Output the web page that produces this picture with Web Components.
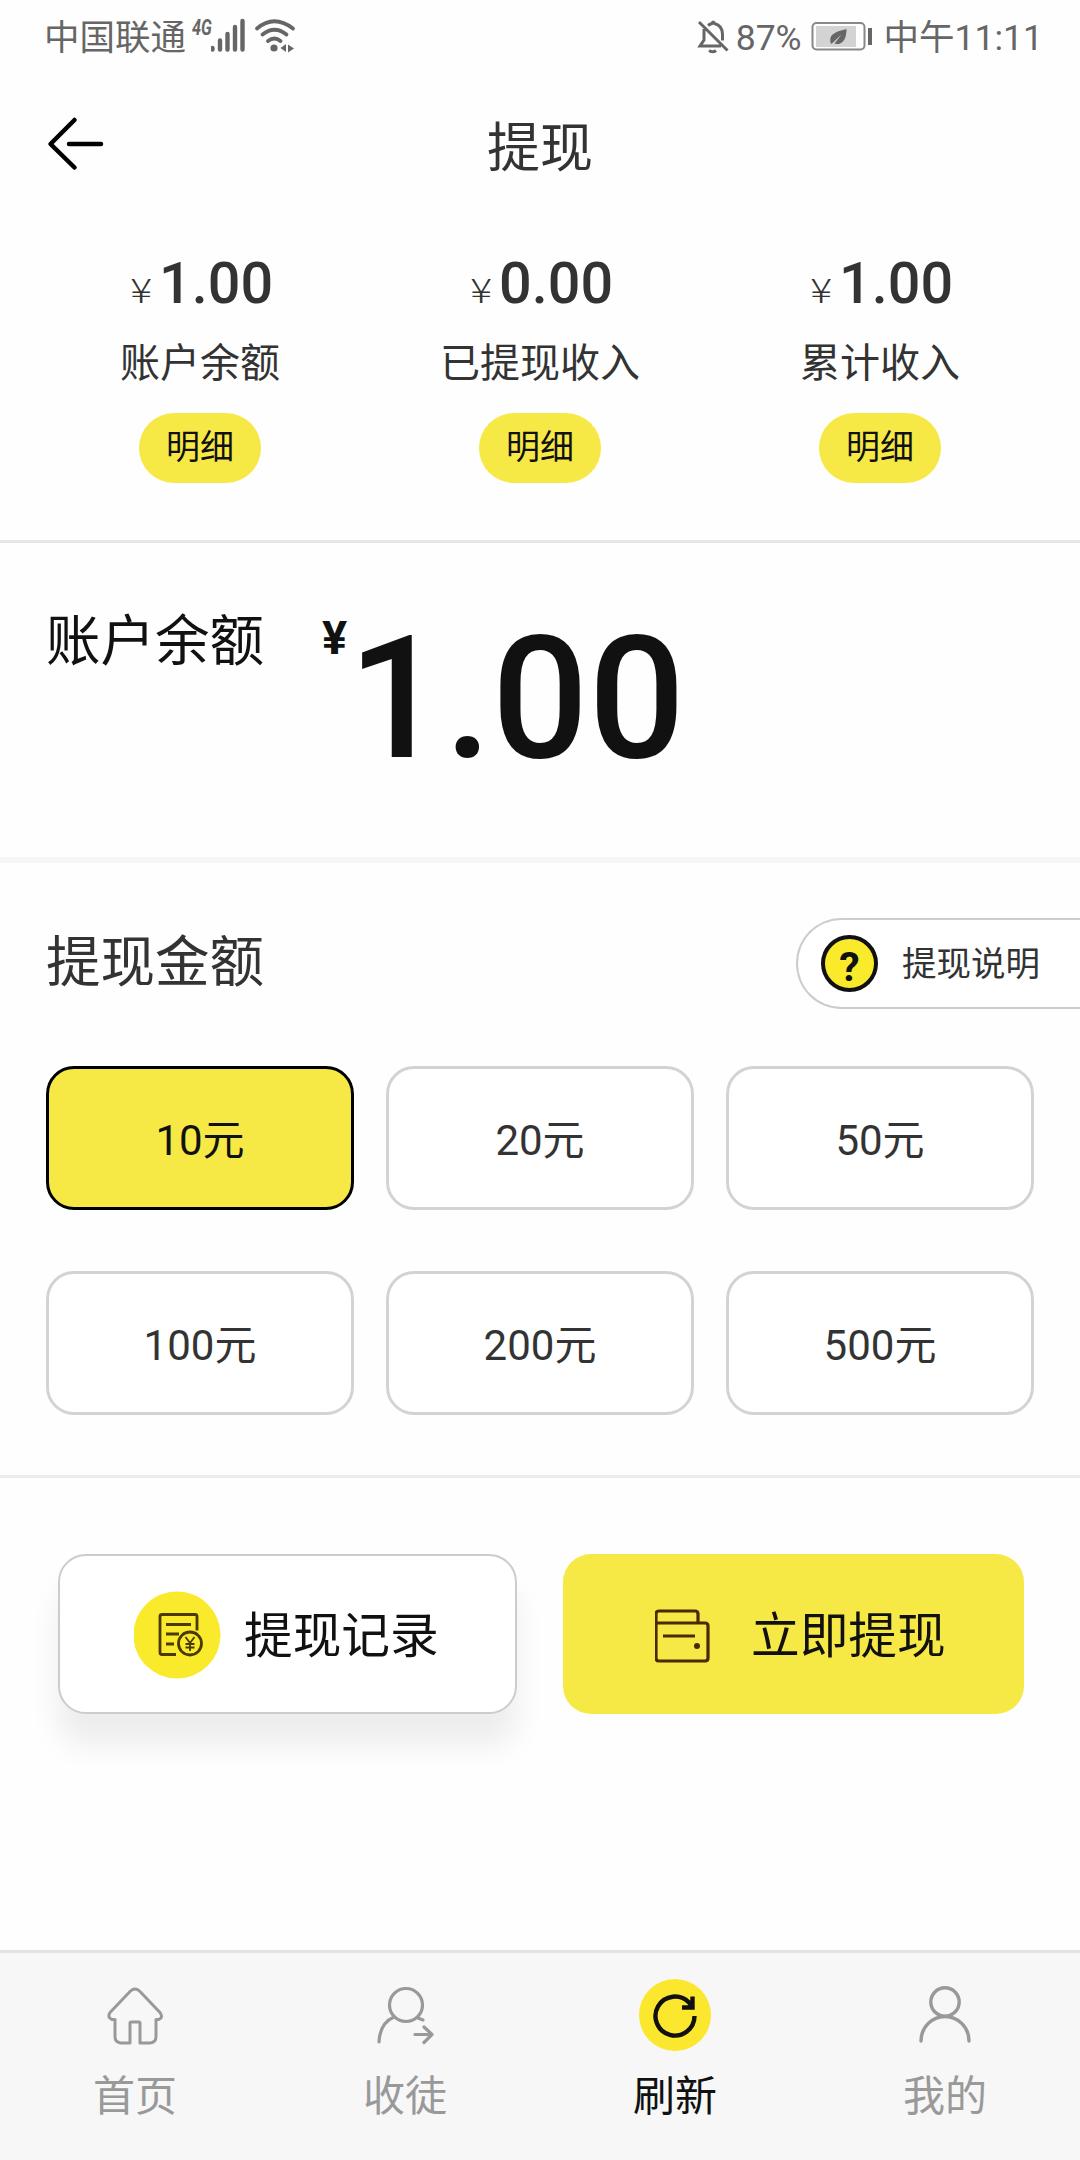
<!DOCTYPE html>
<html lang="zh-CN">
<head>
<meta charset="utf-8">
<title>提现</title>
<style>
html,body{margin:0;padding:0;background:#fefefe}
body{width:1080px;height:2160px;overflow:hidden;font-family:Roboto,"Noto Sans CJK SC",sans-serif;color:#333}
</style>
</head>
<body>
<withdraw-page></withdraw-page>
<script>
function define(name, html) {
  const template = document.createElement('template');
  template.innerHTML = html;
  customElements.define(name, class extends HTMLElement {
    constructor() {
      super();
      this.attachShadow({mode: 'open'}).appendChild(template.content.cloneNode(true));
    }
  });
}

define('status-bar', `
<style>
:host{display:flex;height:74px;box-sizing:border-box;padding:0 37px 0 44px;justify-content:space-between;align-items:center;color:#666;font-size:35.5px;line-height:74px}
.side{display:flex;align-items:center;height:74px}
.lift{padding-top:1px}
svg{display:block;flex:none}
.net{font-size:22px;line-height:20px;font-style:italic;font-weight:700;width:19px;margin:0 0 18px 6px;transform:scaleX(.74);transform-origin:left}
</style>
<div class="side"><span class="lift">中国联通</span><span class="net">4G</span>
<svg width="86" height="74" viewBox="211 0 86 74" fill="none" stroke="#666" stroke-linecap="round">
<path stroke-width="4.4" d="M212.500 48v1.500M220 40.500v9M227.500 34v15.500M235 27v22.500M242.500 21v28.500"/>
<path stroke-width="3.800" d="M257 28.500q17-14.500 36 0M262.500 34.500q12-9.500 24 0M268 41q6.500-5 12.500 0"/>
<circle cx="274" cy="48" r="3.600" fill="#666" stroke="none"/>
<path fill="#666" stroke="none" d="M286 44v8l-5.500-4zM288 44.500v8l6-4z"/></svg></div>
<div class="side">
<svg width="32" height="74" viewBox="697 0 32 74" fill="none" stroke="#666" stroke-width="3"><path d="M699 22l28.500 28.500M704 29v11l-4 6h21M708 25.500q2-1.500 4-2q1-3 2.500 0q8 2 8 11v6"/><path d="M709 50.500q4 2.500 7 0"/></svg>
<span class="lift" style="margin-left:7px">87%</span>
<svg style="margin-left:9px" width="63" height="74" viewBox="811 0 63 74"><rect x="812.500" y="23" width="52" height="26.500" rx="4" fill="none" stroke="#888" stroke-width="2"/><path fill="#d3d3d3" d="M816 26h40v21h-40z"/><path fill="#666" d="M831 44c-3-9 3-12 15.500-15c0 10-4 17-12 14.500l7-9l-9 8.500z"/><path fill="#666" d="M868 28h4v17h-4z"/></svg>
<span class="lift" style="margin-left:10px">中午11:11</span></div>`);

define('title-bar', `
<style>
:host{display:grid;grid-template-columns:160px 1fr 160px;height:144px;align-items:center;color:#333}
svg{display:block;margin:0 0 4px 44px}
h1{margin:0;padding-top:5px;font-weight:400;font-size:53px;line-height:80px;text-align:center}
</style>
<svg width="62" height="60" viewBox="45 114 62 60" fill="none" stroke="#000" stroke-width="4.500" stroke-linecap="round" stroke-linejoin="round"><path d="M75.500 120L51.500 144l24 23.500M70 144h32"/></svg>
<h1><slot></slot></h1>`);

define('income-stat', `
<style>
:host{display:flex;flex-direction:column;align-items:center}
.amount{display:flex;align-items:baseline;height:66px;line-height:66px;font-size:57.500px;font-weight:500;color:#333;margin:-1px 0 0 5px}
.yen{font-family:"Noto Sans CJK SC",sans-serif;font-size:34px;font-weight:300;line-height:40px;margin-right:9px;transform:scaleX(1.2)}
.label{font-size:40px;line-height:60px;margin-top:17px}
.pill{margin-top:19px;width:122px;height:70px;border-radius:35px;background:#f7e945;color:#111;font-size:34px;line-height:69px;text-align:center}
</style>
<div class="amount"><span class="yen">¥</span><slot name="value"></slot></div>
<div class="label"><slot></slot></div>
<div class="pill">明细</div>`);

define('income-row', `
<style>:host{display:grid;grid-template-columns:repeat(3,1fr);column-gap:32px;padding:34px 46px 0;height:325px;box-sizing:border-box;border-bottom:3px solid #e6e6e6}</style>
<slot></slot>`);

define('balance-panel', `
<style>
:host{display:flex;height:320px;box-sizing:border-box;border-bottom:6px solid #f6f6f6;padding-left:46px;color:#111;align-items:flex-start}
.label{font-size:54.500px;line-height:80px;margin-top:58px;width:276px}
.yen{font-size:47px;font-weight:700;line-height:60px;margin-top:65px;width:26px}
.value{font-size:170px;font-weight:500;line-height:200px;margin-top:56px;color:#111}
</style>
<div class="label">账户余额</div><div class="yen">¥</div><div class="value"><slot></slot></div>`);

define('help-link', `
<style>
:host{display:flex;align-items:center;box-sizing:border-box;width:284px;height:91px;border:2px solid #ccc;border-right:0;border-radius:46px 0 0 46px;background:#fff;padding-left:23px;font-size:34.500px;line-height:40px;color:#333;margin-top:1px}
.mark{box-sizing:border-box;width:57px;height:57px;border-radius:50%;border:4px solid #111;background:#f9ea2c;color:#111;font-weight:700;font-size:41px;line-height:56px;text-align:center;margin:0 24px 0 0}
.text{margin-top:1px}
</style>
<span class="mark">?</span><span class="text"><slot></slot></span>`);

define('amount-option', `
<style>
:host{display:flex;align-items:center;justify-content:center;height:144px;box-sizing:border-box;border:3px solid #d3d3d3;border-radius:28px;font-size:42px;line-height:60px;padding-top:5px;color:#333;background:#fff}
:host([selected]){background:#f7e945;border:3px solid #000;color:#111}
</style>
<slot></slot>`);

define('amount-panel', `
<style>
:host{display:block;height:615px;box-sizing:border-box;border-bottom:3px solid #ececec}
header{display:flex;justify-content:space-between;align-items:flex-start;height:203px;box-sizing:border-box;padding:54px 0 0 46px}
h2{margin:1px 0 0;font-weight:400;font-size:54.500px;line-height:88px}
.grid{display:grid;grid-template-columns:repeat(3,308px);gap:61px 32px;padding:0 46px}
</style>
<header><h2>提现金额</h2><help-link>提现说明</help-link></header>
<div class="grid"><slot></slot></div>`);

define('action-button', `
<style>
:host{display:flex;align-items:center;height:160px;box-sizing:border-box;border-radius:28px;font-size:48.700px;line-height:60px;color:#111;background:#fff;border:2px solid #ccc;padding-left:74px;box-shadow:0 32px 30px rgba(0,0,0,.07)}
:host([primary]){background:#f7e945;border:0;padding-left:92px;box-shadow:none}
::slotted(svg){display:block;flex:none}
.text{margin:6px 0 0 -1px}
</style>
<slot name="icon"></slot><span class="text"><slot></slot></span>`);

define('action-row', `
<style>:host{display:grid;grid-template-columns:459px 461px;column-gap:46px;padding:76px 57px 0 58px;height:473px;box-sizing:border-box}</style>
<slot></slot>`);

define('nav-item', `
<style>
:host{display:flex;flex-direction:column;align-items:center;color:#999;font-size:42px;line-height:60px}
:host([active]){color:#111}
::slotted(svg){display:block}
span{margin-top:12px}
</style>
<slot name="icon"></slot><span><slot></slot></span>`);

define('bottom-nav', `
<style>:host{display:grid;grid-template-columns:repeat(4,1fr);height:210px;box-sizing:border-box;background:#f7f7f7;border-top:3px solid #e3e3e3;padding-top:22px}</style>
<slot></slot>`);

define('withdraw-page', `
<style>:host{display:flex;flex-direction:column;width:1080px;height:2160px}
action-row{flex:1}</style>
<status-bar></status-bar>
<title-bar>提现</title-bar>
<income-row>
<income-stat><span slot="value">1.00</span>账户余额</income-stat>
<income-stat><span slot="value">0.00</span>已提现收入</income-stat>
<income-stat><span slot="value">1.00</span>累计收入</income-stat>
</income-row>
<balance-panel>1.00</balance-panel>
<amount-panel>
<amount-option selected>10元</amount-option><amount-option>20元</amount-option><amount-option>50元</amount-option>
<amount-option>100元</amount-option><amount-option>200元</amount-option><amount-option>500元</amount-option>
</amount-panel>
<action-row>
<action-button><svg slot="icon" width="111" height="90" viewBox="134 1590 111 90" fill="none" stroke="#4a3a00" stroke-width="2.800"><circle cx="177" cy="1636" r="43.500" fill="#f9ea2c" stroke="none"/><path d="M176 1655.500h-14q-2 0-2-2v-36q0-2 2-2h33q2 0 2 2v14M166 1625.500h25M166 1635h13M166 1645h8" /><circle cx="190" cy="1644.500" r="11.500"/><path stroke-width="1.800" d="M185.500 1638l4.500 6 4.500-6M190 1644v8M185.500 1645h9M185.500 1648.500h9"/></svg>提现记录</action-button>
<action-button primary><svg slot="icon" width="97" height="62" viewBox="656 1604 97 62" fill="none" stroke="#4a2a00" stroke-width="3.200" stroke-linejoin="round"><path d="M657 1624v-9q0-3 3-3h36q3 0 3 3v9M657 1624h49q3 0 3 3v32q0 3-3 3h-46q-3 0-3-3zM664 1637h32"/><circle cx="698" cy="1647" r="3" fill="#4a2a00" stroke="none"/></svg>立即提现</action-button>
</action-row>
<bottom-nav>
<nav-item><svg slot="icon" width="80" height="80" viewBox="95 1974 80 80" fill="none" stroke="#999" stroke-width="3" stroke-linejoin="round"><path d="M130.500 1990q4.500-4 9 0L160 2011.500q3.500 5-1 7H156v17q0 6-6 6.500H140v-20q0-1-1-1h-8q-1 0-1 1v20h-9q-6-.5-6-6.500v-17h-3q-5-2-2-7z"/></svg>首页</nav-item>
<nav-item><svg slot="icon" width="80" height="80" viewBox="365 1974 80 80" fill="none" stroke="#999" stroke-width="3.200" stroke-linecap="round" stroke-linejoin="round"><circle cx="406" cy="2004" r="16.500"/><path d="M379 2041q1-19 15-25M418 2017l5 2M415 2033.500h17M424 2026l8 7.500-8 8"/></svg>收徒</nav-item>
<nav-item active><svg slot="icon" width="80" height="80" viewBox="635 1974 80 80" fill="none" stroke="#111" stroke-width="4.400"><circle cx="675" cy="2014" r="36" fill="#fbe82e" stroke="none"/><path d="M694.500 2015A19.500 19.500 0 1 1 689 2001.500l3 3.500M692.500 1995.500v11h-10.500"/></svg>刷新</nav-item>
<nav-item><svg slot="icon" width="80" height="80" viewBox="905 1975 80 80" fill="none" stroke="#999" stroke-width="3.400" stroke-linecap="round"><circle cx="945" cy="2002" r="14.200"/><path d="M921 2041a24 24.500 0 0 1 48 0"/></svg>我的</nav-item>
</bottom-nav>`);
</script>
</body>
</html>
